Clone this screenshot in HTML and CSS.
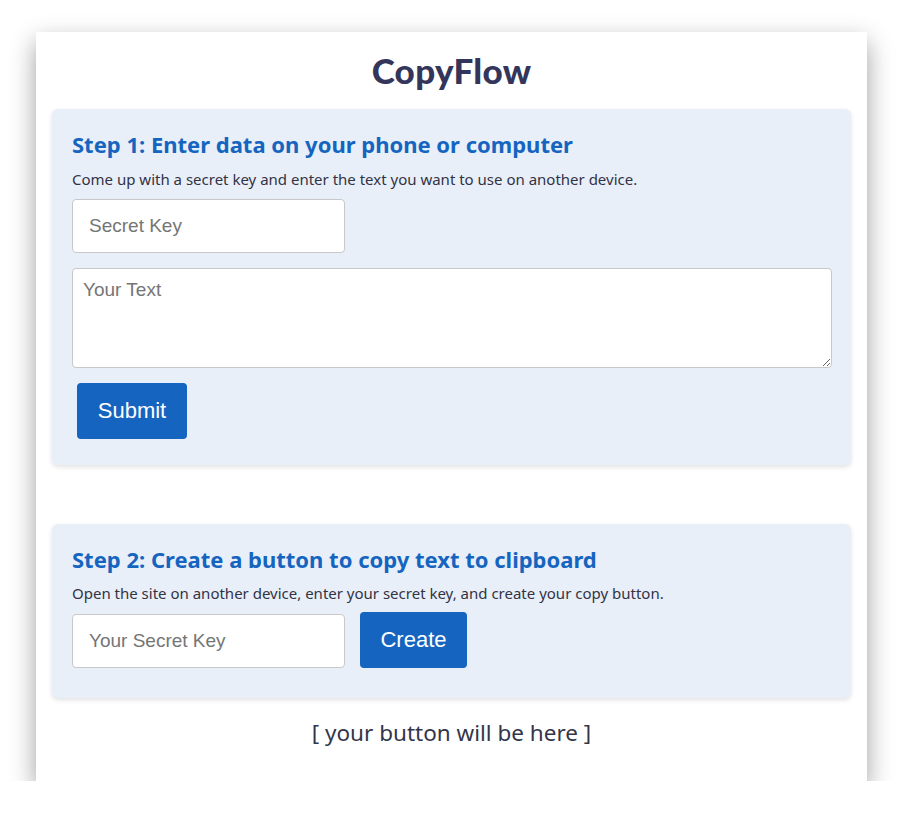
FILE: index.html
```html
<!DOCTYPE html>
<html>
<head>
<meta charset="utf-8">
<link rel="stylesheet" href="styles.css">
</head>
<body>
<div class="container">
  <h1 class="title">CopyFlow</h1>
  <section class="card card-first">
    <h2 class="step">Step 1: Enter data on your phone or computer</h2>
    <p class="desc">Come up with a secret key and enter the text you want to use on another device.</p>
    <input class="field" type="text" placeholder="Secret Key">
    <textarea class="textbox" placeholder="Your Text"></textarea>
    <button class="btn btn-submit">Submit</button>
  </section>
  <section class="card card-second">
    <h2 class="step">Step 2: Create a button to copy text to clipboard</h2>
    <p class="desc desc-second">Open the site on another device, enter your secret key, and create your copy button.</p>
    <div class="row">
      <input class="field" type="text" placeholder="Your Secret Key">
      <button class="btn btn-create">Create</button>
    </div>
  </section>
  <p class="placeholder-note">[ your button will be here ]</p>
</div>
</body>
</html>
```
FILE: styles.css
```css
html, body {
  margin: 0;
  padding: 0;
  background: #ffffff;
}
body {
  padding-top: 32px;
  font-family: "Noto Sans", "Liberation Sans", sans-serif;
}
.container {
  width: 831px;
  margin: 0 auto;
  background: #ffffff;
  box-sizing: border-box;
  padding: 18px 16px 33px;
  box-shadow: 0 10px 24px rgba(0, 0, 0, 0.38);
}
.title {
  margin: 0;
  text-align: center;
  font-family: "Lato", sans-serif;
  font-weight: 900;
  font-size: 35px;
  line-height: 40px;
  color: #33365a;
  letter-spacing: 0.3px;
}
.card {
  background: #e8eff9;
  border-radius: 6px;
  box-shadow: 0 2px 5px rgba(0, 0, 0, 0.12);
  padding: 22px 20px 26px;
}
.card-first {
  margin-top: 19px;
}
.card-second {
  margin-top: 59px;
  padding-bottom: 30px;
}
.step {
  margin: 0;
  font-family: "Noto Sans", sans-serif;
  font-weight: 700;
  font-size: 22px;
  line-height: 26px;
  color: #1565c0;
}
.desc {
  margin: 12px 0 10px;
  font-family: "Noto Sans", sans-serif;
  font-size: 15px;
  line-height: 20px;
  color: #333344;
}
.desc-second {
  margin: 11px 0 9px;
}
.field {
  display: block;
  box-sizing: border-box;
  width: 273px;
  height: 54px;
  border: 1px solid #c8c8c8;
  border-radius: 4px;
  background: #ffffff;
  padding: 0 16px;
  font-family: "Liberation Sans", Arial, sans-serif;
  font-size: 19px;
  color: #333;
  margin: 0;
}
.field::placeholder, .textbox::placeholder {
  color: #757575;
}
.textbox {
  display: block;
  box-sizing: border-box;
  width: 760px;
  height: 100px;
  margin: 15px 0 0;
  border: 1px solid #c8c8c8;
  border-radius: 4px;
  padding: 10px 10px;
  font-family: "Liberation Sans", Arial, sans-serif;
  font-size: 19px;
  line-height: 22px;
  background: #ffffff;
}
.btn {
  display: block;
  height: 56px;
  border: none;
  border-radius: 4px;
  background: #1565c0;
  color: #ffffff;
  font-family: "Liberation Sans", Arial, sans-serif;
  font-size: 22px;
  padding: 0;
}
.btn-submit {
  width: 110px;
  margin: 15px 0 0 5px;
}
.btn-create {
  width: 107px;
}
.row {
  display: flex;
  align-items: flex-end;
  gap: 15px;
}
.placeholder-note {
  margin: 20px 0 0;
  text-align: center;
  font-family: "Noto Sans", "Open Sans", sans-serif;
  font-size: 22.5px;
  line-height: 30px;
  color: #33364a;
}
```
